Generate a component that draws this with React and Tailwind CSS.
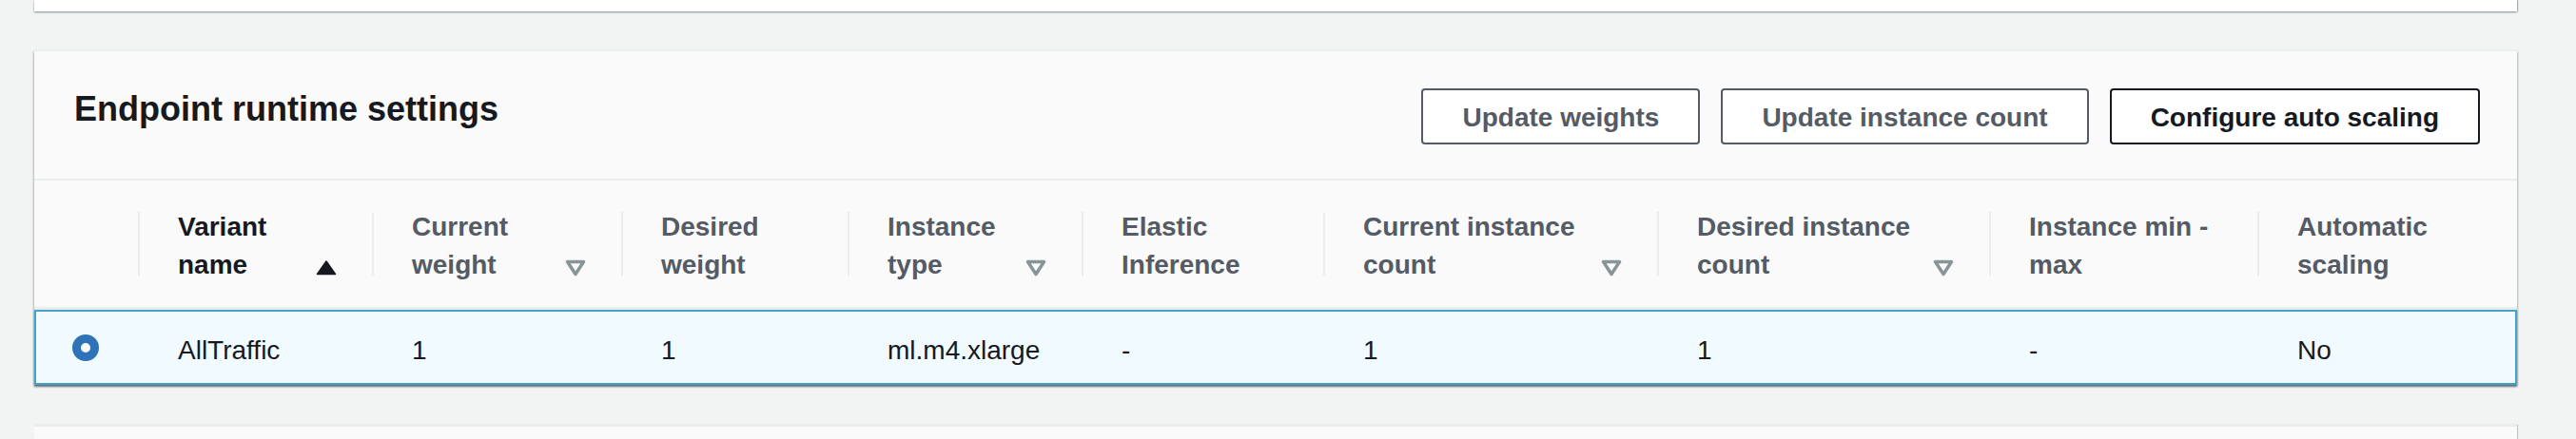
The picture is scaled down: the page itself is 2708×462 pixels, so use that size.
import React from "react";

const font = { fontFamily: '"Liberation Sans", Arial, sans-serif' };

const columns = [
  { lines: [], width: "w-[109px]" },
  { lines: ["Variant", "name"], sort: "asc", active: true },
  { lines: ["Current", "weight"], sort: "none" },
  { lines: ["Desired", "weight"] },
  { lines: ["Instance", "type"], sort: "none" },
  { lines: ["Elastic", "Inference"] },
  { lines: ["Current instance", "count"], sort: "none" },
  { lines: ["Desired instance", "count"], sort: "none" },
  { lines: ["Instance min -", "max"] },
  { lines: ["Automatic", "scaling"] },
];

const row = ["AllTraffic", "1", "1", "ml.m4.xlarge", "-", "1", "1", "-", "No"];

const gridCols =
  "grid grid-cols-[109px_246px_262px_238px_246px_254px_351px_349px_282px_273px]";

const SortIcon = ({ sort }) => {
  if (sort === "asc") {
    return (
      <svg width="22" height="16" viewBox="0 0 22 16">
        <path d="M11 1 L20.5 14.5 L1.5 14.5 Z" fill="#16191f" stroke="#16191f" strokeWidth="1.5" strokeLinejoin="round" />
      </svg>
    );
  }
  return (
    <svg width="22" height="18" viewBox="0 0 22 18">
      <path d="M2.5 2.5 L19.5 2.5 L11 15.5 Z" fill="none" stroke="#879596" strokeWidth="3.5" strokeLinejoin="round" />
    </svg>
  );
};

const Button = ({ children, primary }) => (
  <button
    className={
      primary
        ? "h-[59px] px-[41px] pt-[2px] border-2 border-[#16191f] rounded-[4px] bg-white text-[28px] font-bold text-[#16191f] leading-[40px]"
        : "h-[59px] px-[41px] pt-[2px] border-2 border-[#545b64] rounded-[4px] bg-white text-[28px] font-bold text-[#545b64] leading-[40px]"
    }
  >
    {children}
  </button>
);

export default function App() {
  return (
    <div className="w-[2708px] h-[462px] overflow-hidden bg-[#f2f3f3] pl-[36px] pr-[62px]" style={font}>
      {/* card above, cut off */}
      <div className="h-[12px] bg-white shadow-[0_1px_2px_rgba(0,28,36,0.45),1px_0_1px_rgba(0,28,36,0.2)]" />

      {/* Endpoint runtime settings */}
      <div className="mt-[41px] bg-[#fafafa] shadow-[0_2px_2px_rgba(0,28,36,0.3),1px_1px_2px_rgba(0,28,36,0.15),-1px_1px_2px_rgba(0,28,36,0.15)] border-t border-[#eaeded]">
        <div className="h-[136px] flex items-center justify-between pl-[42px] pr-[39px] border-b-2 border-[#eaeded]">
          <h2 className="text-[36px] font-bold text-[#16191f] leading-[44px] -mt-[13px]">
            Endpoint runtime settings
          </h2>
          <div className="flex items-center gap-[22px] mt-[3px]">
            <Button>Update weights</Button>
            <Button>Update instance count</Button>
            <Button primary>Configure auto scaling</Button>
          </div>
        </div>

        {/* table header */}
        <div className={`${gridCols} h-[136px] border-b-[3px] border-[#eaeded]`}>
          {columns.map((col, i) => (
            <div key={i} className="flex items-center">
              {i > 0 && <div className="w-[2px] h-[67px] bg-[#eaeded] shrink-0" />}
              {col.lines.length > 0 && (
                <div className="flex-1 flex items-end justify-between pl-[40px] pr-[37px] mt-[4px]">
                  <div
                    className={
                      col.active
                        ? "text-[28px] font-bold leading-[40px] text-[#16191f]"
                        : "text-[28px] font-bold leading-[40px] text-[#545b64]"
                    }
                  >
                    {col.lines.map((l) => (
                      <div key={l} className="whitespace-nowrap">{l}</div>
                    ))}
                  </div>
                  {col.sort && (
                    <div className="h-[40px] flex items-center -mb-[3px]">
                      <SortIcon sort={col.sort} />
                    </div>
                  )}
                </div>
              )}
            </div>
          ))}
        </div>

        {/* selected row */}
        <div className={`${gridCols} h-[79px] bg-[#f1faff] border-2 border-[#44a3c8] shadow-[0_2px_2px_rgba(0,28,36,0.3)]`}>
          <div className="flex items-center pl-[38px]">
            <div className="w-[28px] h-[28px] rounded-full border-[9px] border-[#2e73b8] bg-white" />
          </div>
          {row.map((v, i) => (
            <div key={i} className="flex items-center pl-[40px] pt-[6px] text-[28px] leading-[40px] text-[#16191f]">
              {v}
            </div>
          ))}
        </div>
      </div>

      {/* card below, cut off */}
      <div className="mt-[42px] h-[20px] bg-[#fafafa] border-t-2 border-[#eaeded] shadow-[1px_0_1px_rgba(0,28,36,0.2)]" />
    </div>
  );
}
